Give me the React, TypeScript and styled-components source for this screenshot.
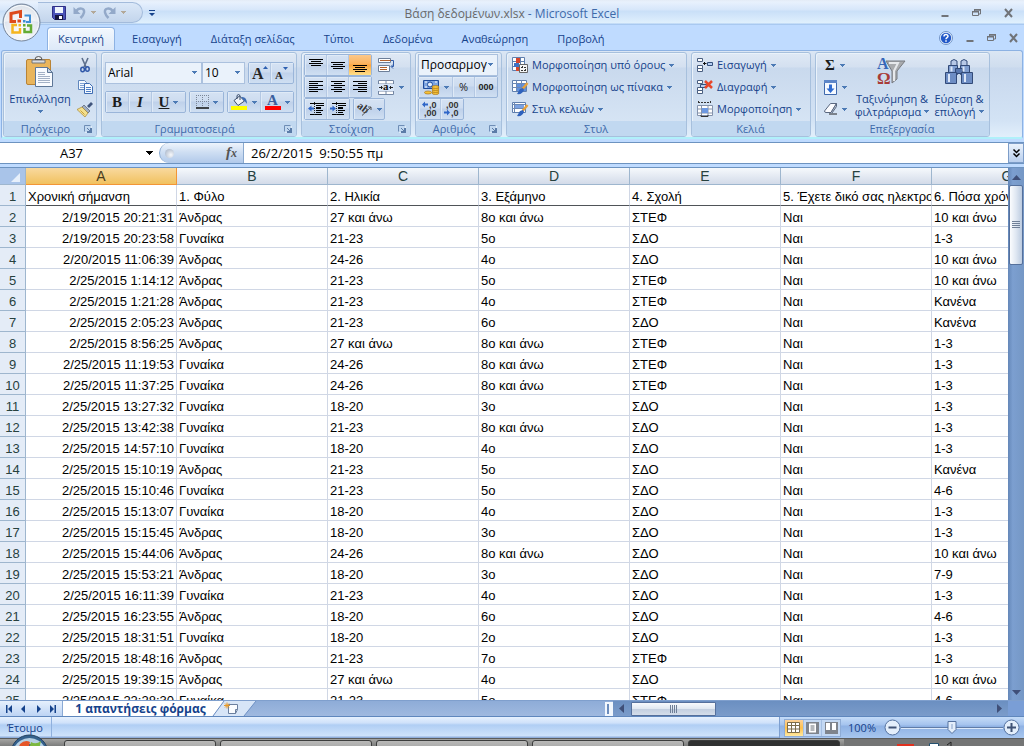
import React, { useState } from "react";
import styled, { createGlobalStyle, css } from "styled-components";

const UI_FONT = '"Open Sans", "Noto Sans", sans-serif';
const CELL_FONT = '"Liberation Sans", Arial, sans-serif';

const GlobalStyle = createGlobalStyle`
  *, *::before, *::after { box-sizing: border-box; }
  body { margin: 0; background: #b3cbec; overflow: hidden; }
  button, input, select { font: inherit; color: inherit; margin: 0; padding: 0; border: 0; background: none; outline: none; }
  svg { display: block; flex: none; overflow: visible; }
`;

const Window = styled.div`
  display: flex;
  flex-direction: column;
  height: 100vh;
  position: relative;
  overflow: hidden;
  font: 11px/16px ${UI_FONT};
  color: #15428b;
  background: #bfdbff;
`;

/* ---------- title bar ---------- */

const TitleBar = styled.header`
  display: grid;
  grid-template-columns: 1fr auto 1fr;
  align-items: center;
  height: 25px;
  flex: none;
  padding-left: 38px;
  background: linear-gradient(#e3ebf6 0, #e8f1fd 2px, #d6e6fa 10px, #c9dff8 11px, #e0f0fd 23px, #a9c9f0 24px);
`;

const QuickAccess = styled.div`
  display: flex;
  align-items: center;
  gap: 6px;
`;

const QuickPill = styled.div`
  display: flex;
  align-items: center;
  gap: 7px;
  height: 21px;
  width: 105px;
  padding-left: 14px;
  border: 1px solid #a3bbdb;
  border-left: 0;
  border-radius: 0 11px 11px 0;
  background: linear-gradient(#dbe8f8, #c3d5ec);
`;

const PlainButton = styled.button`
  display: flex;
  align-items: center;
  justify-content: center;
  gap: 5px;
`;

const Caption = styled.h1`
  margin: 0;
  padding: 2px 38px 0 0;
  font-size: 12px;
  font-weight: 400;
  line-height: 20px;
  color: #3e6aaa;
`;

const FileName = styled.span`
  color: #696969;
`;

const WindowButtons = styled.div<{ $gap: number; $right: number }>`
  display: flex;
  align-items: center;
  justify-self: end;
  gap: ${(p) => p.$gap}px;
  padding-right: ${(p) => p.$right}px;
`;

const OfficeButton = styled.button`
  position: absolute;
  left: 2px;
  top: 3px;
  z-index: 2;
  line-height: 0;
`;

/* ---------- ribbon ---------- */

const TabRow = styled.div`
  display: flex;
  justify-content: space-between;
  height: 25px;
  flex: none;
  padding-left: 47px;
  background: #bfdbff;
`;

const TabList = styled.div`
  display: flex;
  align-items: flex-end;
`;

const Tab = styled.button<{ $active?: boolean }>`
  height: 23px;
  padding: 0 14px;
  border: 1px solid transparent;
  border-width: 1px 1px 0 0;
  ${(p) =>
    p.$active &&
    css`
      padding: 0 10px;
      margin-right: 3px;
      border-width: 1px 1px 0;
      border-color: #8db2e3;
      border-radius: 4px 4px 0 0;
      background: linear-gradient(#f3f8fe, #dde9f8);
      box-shadow: inset 1px 1px 0 #fff;
    `}
`;

const Ribbon = styled.div`
  display: flex;
  gap: 4px;
  height: 89px;
  flex: none;
  margin: 0 1px;
  padding: 1px 1px 0;
  border: 1px solid #8db2e3;
  border-bottom: 2px solid #b0f0fa;
  border-radius: 3px;
  background: linear-gradient(#dbe6f4 0, #cfddee 16px, #c8d8ed 17px, #d3e3f5 70px, #e2effb 100%);
`;

const Group = styled.section<{ $width: number }>`
  display: flex;
  flex-direction: column;
  width: ${(p) => p.$width}px;
  flex: none;
  border: 1px solid #a7c0dd;
  border-radius: 3px;
  background: linear-gradient(#dfe9f5 0, #d4e0f0 14px, #c9d9ed 15px, #d9e7f6 100%);
  box-shadow: inset 1px 1px 0 #eaf2fa;
  overflow: hidden;
`;

const GroupBody = styled.div<{ $pad?: string; $gap?: number; $column?: boolean }>`
  display: flex;
  flex: 1;
  min-height: 0;
  flex-direction: ${(p) => (p.$column ? "column" : "row")};
  gap: ${(p) => p.$gap || 0}px;
  padding: ${(p) => p.$pad || "1px 2px 0"};
`;

const GroupFooter = styled.div`
  display: flex;
  align-items: center;
  height: 15px;
  flex: none;
  padding: 0 4px 0 3px;
  background: #c1d8f0;
  color: #3e6aaa;
  white-space: nowrap;
`;

const GroupName = styled.h2`
  flex: 1;
  margin: 0;
  font-size: 11px;
  font-weight: 400;
  line-height: 15px;
  text-align: center;
`;

const LargeButton = styled.button<{ $width: number }>`
  display: flex;
  flex-direction: column;
  align-items: center;
  width: ${(p) => p.$width}px;
  flex: none;
  padding-top: 2px;
  line-height: 13px;
  white-space: nowrap;
`;

const LargeIcon = styled.span`
  height: 36px;
`;

const LabelLine = styled.span`
  display: flex;
  align-items: center;
  gap: 3px;
  min-height: 13px;
`;

const Stack = styled.div`
  display: flex;
  flex-direction: column;
`;

const Row = styled.div<{ $gap?: number }>`
  display: flex;
  align-items: center;
  gap: ${(p) => p.$gap || 0}px;
`;

const IconButton = styled.button<{ $width: number }>`
  display: flex;
  align-items: center;
  justify-content: center;
  gap: 5px;
  width: ${(p) => p.$width}px;
  height: 22px;
`;

const TextButton = styled.button`
  display: flex;
  align-items: center;
  gap: 4px;
  height: 22px;
  padding-left: 3px;
  white-space: nowrap;
`;

const ButtonSet = styled.div`
  display: flex;
  height: 22px;
  border: 1px solid #9ab5d9;
  border-radius: 2px;
  background: linear-gradient(#d5e2f3 0, #cddcf0 9px, #bfd1ea 10px, #cfdff2 100%);
`;

const SetButton = styled.button<{ $width: number; $on?: boolean }>`
  display: flex;
  align-items: center;
  justify-content: center;
  gap: 4px;
  width: ${(p) => p.$width}px;
  color: #222;
  border-right: 1px solid #b4c8e3;
  box-shadow: inset 1px 1px 0 #dfeaf7;
  &:last-child { border-right: 0; }
  ${(p) =>
    p.$on &&
    css`
      background: linear-gradient(#fbc88b 0, #fdb35c 9px, #fca63f 10px, #ffe08a 100%);
      box-shadow: none;
    `}
`;

const ThousandsMark = styled.span`
  font: 700 9px/16px ${CELL_FONT};
`;

const Combo = styled.label<{ $width: number }>`
  position: relative;
  display: block;
  width: ${(p) => p.$width}px;
  height: 22px;
  border: 1px solid #abc1de;
  background: #eaf2fb;
  color: #000;
`;

const ComboSelect = styled.select`
  appearance: none;
  width: 100%;
  height: 20px;
  padding: 0 10px 0 2px;
  font-size: 12px;
  line-height: 20px;
`;

const ComboArrow = styled.span`
  position: absolute;
  right: 4px;
  top: 8px;
  pointer-events: none;
`;

/* ---------- formula bar ---------- */

const FormulaBar = styled.div`
  display: flex;
  flex: none;
  height: 22px;
  margin-top: 3px;
  border: 1px solid #6d93c0;
  border-width: 1px 0;
  background: #fff;
  color: #000;
  font-size: 13px;
`;

const NameBox = styled.label`
  display: flex;
  align-items: center;
  width: 159px;
  padding-right: 6px;
`;

const NameInput = styled.input`
  flex: 1;
  min-width: 0;
  text-align: center;
  padding-right: 3px;
`;

const FxPanel = styled.div`
  display: flex;
  align-items: center;
  justify-content: space-between;
  width: 85px;
  padding: 0 6px 0 5px;
  border: 1px solid #8aa9cf;
  border-width: 0 1px 0 1px;
  border-radius: 10px 0 0 10px;
  background: linear-gradient(#eef4fc, #cfdff3 45%, #b1c9ea);
`;

const Knob = styled.span`
  width: 9px;
  height: 9px;
  border-radius: 50%;
  background: radial-gradient(circle at 65% 65%, #f6f8fb, #9fadc2);
`;

const FxButton = styled.button`
  font: italic 700 15px/18px "Liberation Serif", serif;
  color: #555;
  padding-bottom: 2px;
`;

const FxSub = styled.span`
  font-size: 12px;
`;

const FormulaInput = styled.input`
  flex: 1;
  min-width: 0;
  padding-left: 7px;
`;

const ExpandButton = styled.button`
  display: flex;
  align-items: center;
  justify-content: center;
  width: 16px;
  border: 1px solid #7d9dc9;
  background: linear-gradient(#eaf2fc, #b9cfee);
`;

/* ---------- sheet ---------- */

const SheetArea = styled.div`
  display: flex;
  flex: 1;
  min-height: 0;
  margin-top: 3px;
  border-top: 1px solid #6d93c0;
  background: #fff;
`;

const SheetView = styled.div`
  flex: 1;
  min-width: 0;
  overflow: hidden;
`;

const Sheet = styled.table`
  table-layout: fixed;
  border-collapse: separate;
  border-spacing: 0;
  width: 1083px;
  font: 13px/20px ${CELL_FONT};
  color: #000;
`;

const Corner = styled.td`
  height: 17px;
  padding: 4px 5px 1px;
  border-right: 1px solid #9eb6ce;
  border-bottom: 1px solid #9eb6ce;
  background: #a9c4e9;
`;

const ColumnHead = styled.th<{ $active?: boolean }>`
  height: 17px;
  padding: 0;
  font-size: 14px;
  font-weight: 400;
  line-height: 16px;
  color: ${(p) => (p.$active ? "#4a3c20" : "#27413e")};
  border-right: 1px solid ${(p) => (p.$active ? "#f29536" : "#9eb6ce")};
  border-bottom: 1px solid ${(p) => (p.$active ? "#f29536" : "#9eb6ce")};
  background: ${(p) => (p.$active ? "linear-gradient(#f9d99f, #f1c15f)" : "linear-gradient(#f6f9fc, #d3dbe9)")};
`;

const RowHead = styled.th`
  height: 21px;
  padding: 4px 0 0;
  font-weight: 400;
  line-height: 16px;
  color: #27413e;
  border-right: 1px solid #9eb6ce;
  border-bottom: 1px solid #9eb6ce;
  background: #e4ecf7;
`;

const Cell = styled.td<{ $right?: boolean; $frozen?: boolean }>`
  height: 21px;
  padding: 4px 2px 0;
  line-height: 16px;
  overflow: hidden;
  white-space: nowrap;
  text-align: ${(p) => (p.$right ? "right" : "left")};
  border-right: 1px solid #d0d7e5;
  border-bottom: 1px solid ${(p) => (p.$frozen ? "#4f5358" : "#d0d7e5")};
`;

const VerticalBar = styled.div`
  display: flex;
  flex-direction: column;
  align-items: center;
  width: 16px;
  flex: none;
  padding: 7px 0 5px;
  background: linear-gradient(90deg, #6487b8, #7c9fd0 30%, #7597c5);
`;

const VerticalThumb = styled.div`
  display: flex;
  align-items: center;
  justify-content: center;
  width: 14px;
  height: 80px;
  margin: 5px 0 auto;
  border: 1px solid #55709c;
  border-radius: 2px;
  background: linear-gradient(90deg, #fbfcfe, #dfe7f2 50%, #bccbe0);
`;

const SheetBar = styled.div`
  display: flex;
  flex: none;
  height: 17px;
  border-top: 1px solid #7f9fcd;
  border-bottom: 1px solid #5f87bd;
  background: linear-gradient(#8eacd8, #9fb9df);
`;

const SheetNav = styled.div`
  display: flex;
  align-items: center;
  justify-content: space-between;
  width: 63px;
  padding: 0 6px;
  border-right: 1px solid #8aa9d4;
  background: linear-gradient(#e6f0fd, #bdd4f4);
`;

const SheetTab = styled.button`
  padding: 0 2px 0 10px;
  background: #fff;
  font-size: 12px;
  font-weight: 700;
  line-height: 15px;
  color: #15428b;
  white-space: nowrap;
  min-width: 147px;
`;

const BarFill = styled.div`
  flex: 1;
`;

const Splitter = styled.div`
  width: 8px;
  margin-top: 1px;
  border: 2px solid #f2f7fd;
  border-right-width: 4px;
  background: #6b8cbd;
`;

const HorizontalBar = styled.div`
  display: flex;
  align-items: center;
  width: 395px;
  padding: 0 6px;
  background: linear-gradient(#6b8fc1, #7b9cca);
`;

const HorizontalThumb = styled.div`
  display: flex;
  align-items: center;
  justify-content: center;
  width: 85px;
  height: 14px;
  margin: 0 auto 0 7px;
  border: 1px solid #55709c;
  border-radius: 1px;
  background: linear-gradient(#f8fafd, #dfe7f1 50%, #c3cfe0 51%, #d5deea);
`;

const BarCorner = styled.div`
  width: 16px;
  background: #7a9ed6;
`;

/* ---------- status bar ---------- */

const StatusBar = styled.footer`
  display: flex;
  flex: none;
  height: 21px;
  background: linear-gradient(#e6f1fe 0, #cfe1fa 6px, #b0cef4 8px, #cfe3fb 19px, #90aedb 20px);
`;

const StatusText = styled.span`
  padding: 1px 8px 0 7px;
  line-height: 19px;
  border-right: 1px solid #8fb0dd;
`;

const StatusTools = styled.div`
  display: flex;
  align-items: center;
  padding: 0 4px;
  border-left: 1px solid #7d9fd0;
  background: linear-gradient(#c5dcf8 0, #a4c3ee 8px, #8fb2e4 9px, #a7c6ef 100%);
`;

const ViewSet = styled.div`
  display: flex;
  height: 18px;
  width: 57px;
  margin-right: 7px;
  border: 1px solid #8eacd6;
  background: #c3d8f3;
`;

const ViewButton = styled.button<{ $on?: boolean }>`
  display: flex;
  flex: 1;
  align-items: center;
  justify-content: center;
  border-right: 1px solid #a5bfe2;
  background: ${(p) => (p.$on ? "linear-gradient(#fbd19a, #fdc04c 50%, #ffe9a0)" : "none")};
  &:last-child { border-right: 0; }
`;

const ZoomLabel = styled.output`
  width: 36px;
`;

const ZoomTrack = styled.label`
  position: relative;
  display: flex;
  align-items: center;
  width: 102px;
  height: 18px;
`;

const ZoomLine = styled.span`
  flex: 1;
  height: 2px;
  background: #5f7ca8;
  border-bottom: 1px solid #dce9fa;
`;

const ZoomRange = styled.input`
  position: absolute;
  inset: 0;
  width: 100%;
  height: 100%;
  opacity: 0;
`;

const ZoomThumb = styled.span`
  position: absolute;
  top: 2px;
  transform: translateX(-50%);
  pointer-events: none;
`;

/* ---------- desktop task bar ---------- */

const TaskBar = styled.div`
  display: flex;
  gap: 4px;
  flex: none;
  height: 8px;
  padding-left: 64px;
  overflow: hidden;
  border-top: 1px solid #5b5c5c;
  background: linear-gradient(#a5a5a3, #7c7d7c);
`;

const TaskButton = styled.button<{ $active?: boolean }>`
  width: 152px;
  height: 24px;
  flex: none;
  margin-top: 1px;
  padding: 4px 9px;
  border: 1px solid #3c3d3d;
  border-radius: 3px;
  background: ${(p) => (p.$active ? "#303131" : "linear-gradient(#b9b9b8, #858686)")};
`;

const Tray = styled.div`
  flex: 1;
  padding-left: 53px;
  background: #747575;
`;

const StartOrb = styled.button`
  position: absolute;
  left: 10px;
  bottom: -26px;
  z-index: 2;
`;

/* ---------- icons ---------- */

const Arrow = ({ color = "#4c7ab5" }: { color?: string }) => (
  <svg width="5" height="3" viewBox="0 0 5 3" shapeRendering="crispEdges">
    <path d="M0 0h5v1H0zM1 1h3v1H1zM2 2h1v1H2z" fill={color} />
  </svg>
);

const NameArrow = () => (
  <svg width="7" height="4" viewBox="0 0 7 4" shapeRendering="crispEdges">
    <path d="M0 0h7v1H0zM1 1h5v1H1zM2 2h3v1H2zM3 3h1v1H3z" fill="#000" />
  </svg>
);

const OfficeLogo = () => (
  <svg width="39" height="39" viewBox="0 0 39 39">
    <defs>
      <radialGradient id="orb" cx="50%" cy="75%" r="75%">
        <stop offset="0" stopColor="#ffffff" />
        <stop offset="0.6" stopColor="#e3e8f0" />
        <stop offset="1" stopColor="#b3bfd0" />
      </radialGradient>
    </defs>
    <circle cx="19.500" cy="19.500" r="18.500" fill="url(#orb)" stroke="#76869c" />
    <circle cx="19.500" cy="19.500" r="17" fill="none" stroke="#f4f8fc" />
    <path d="M2.500 19a17 17 0 0 1 34 0q-17-5-34 0z" fill="#fff" opacity="0.5" />
    <g fill="none">
      <path d="M14 18.500H9V10.500l9.500-2v6.500" stroke="#dd4a1c" strokeWidth="3" />
      <path d="M22.500 12.500H28V19h-4" stroke="#3f8fd6" strokeWidth="2" />
      <path d="M15 22h-4.500v7.500H18V25" stroke="#f5b51e" strokeWidth="2.500" />
      <path d="M25 22.500h4v6.500h-6.500v-4" stroke="#64ac34" strokeWidth="2.500" />
    </g>
    <path d="M15.500 16.500h3.500v3h-3.500z" fill="#dd4a1c" />
    <path d="M21 17h2.500v2.500H21z" fill="#3f8fd6" />
    <path d="M16.500 21h2.500v2.500h-2.500z" fill="#f5b51e" />
    <path d="M21 21h2.500v2.500H21z" fill="#64ac34" />
  </svg>
);

const SaveIcon = () => (
  <svg width="14" height="14" viewBox="0 0 14 14">
    <path d="M0.500 0.500h13v13h-11l-2-2z" fill="#4a53b8" stroke="#2f2f86" />
    <path d="M3 1h8v6H3z" fill="#eef4fd" />
    <path d="M3 9h8v5H3z" fill="#15153f" />
    <path d="M7 10h3v3H7z" fill="#fff" />
  </svg>
);

const UndoIcon = ({ flip }: { flip?: boolean }) => (
  <svg width="13" height="13" viewBox="0 0 13 13">
    <g transform={flip ? "matrix(-1 0 0 1 13 0)" : undefined}>
      <path d="M3 5.500C6 1 12 2 11 6.500 10.500 9 9 10.500 7.500 12" fill="none" stroke="#93a9c9" strokeWidth="2.500" />
      <path d="M0.500 1v7h7z" fill="#93a9c9" />
    </g>
  </svg>
);

const CustomizeIcon = () => (
  <svg width="6" height="6" viewBox="0 0 6 6">
    <path d="M0 0h6v1H0zM0 3h6L3 6z" fill="#15428b" />
  </svg>
);

const MinIcon = () => (
  <svg width="8" height="10" viewBox="0 0 8 10">
    <path d="M0.500 8h7" stroke="#707378" strokeWidth="2" />
  </svg>
);

const RestoreIcon = () => (
  <svg width="9" height="8" viewBox="0 0 9 8">
    <path d="M2.500 2V1h6v4h-1.500M0.500 2.500h6v4h-6z" fill="none" stroke="#707378" />
    <path d="M0 2h7v1.500H0zM2 0h7v1.500H2z" fill="#707378" />
  </svg>
);

const CloseIcon = () => (
  <svg width="9" height="8" viewBox="0 0 9 8">
    <path d="M1 0l7 8M8 0L1 8" stroke="#707378" strokeWidth="2" />
  </svg>
);

const HelpIcon = () => (
  <svg width="14" height="14" viewBox="0 0 14 14">
    <circle cx="7" cy="7" r="6.500" fill="#e9f2fd" stroke="#6f93c8" />
    <circle cx="7" cy="7" r="5.200" fill="#2258c8" />
    <path d="M5 5.600C5 3 9 3 9 5.300 9 6.800 7 6.500 7 8.300M7 9.300v1.500" fill="none" stroke="#fff" strokeWidth="1.500" />
  </svg>
);

const PasteIcon = () => (
  <svg width="28" height="32" viewBox="0 0 28 32">
    <rect x="0.500" y="3.500" width="24" height="25" rx="1.500" fill="#e9b55c" stroke="#b98335" />
    <path d="M6 4h13v3H6z" fill="#d8dde4" stroke="#777" />
    <path d="M9 3.500q0-3 3.500-3t3.500 3z" fill="#eee" stroke="#555" />
    <path d="M9.500 11.500h12l5 5v14h-17z" fill="#f8fbff" stroke="#5e7797" />
    <path d="M21.500 11.500v5h5z" fill="#c9d6e6" stroke="#5e7797" />
    <path d="M12 16.500h7M12 18.500h7M12 20.500h12M12 22.500h12M12 24.500h12M12 26.500h12" stroke="#a3b1c6" />
  </svg>
);

const CutIcon = () => (
  <svg width="10" height="15" viewBox="0 0 10 15">
    <path d="M2 0l4 9M8 0L4 9" stroke="#5d6f8c" strokeWidth="1.600" />
    <ellipse cx="2.600" cy="11.500" rx="1.800" ry="2.300" fill="none" stroke="#2f57a8" strokeWidth="1.500" />
    <ellipse cx="7.400" cy="11" rx="1.800" ry="2.300" fill="none" stroke="#2f57a8" strokeWidth="1.500" />
  </svg>
);

const CopyIcon = () => (
  <svg width="15" height="14" viewBox="0 0 15 14">
    <path d="M0.500 0.500h6l2 2v7h-8z" fill="#f4f9ff" stroke="#5f86bd" />
    <path d="M2 3.500h4M2 5.500h4M2 7.500h4" stroke="#7fa3d5" />
    <path d="M6.500 3.500h5l3 3v7h-8z" fill="#f4f9ff" stroke="#3f6db3" />
    <path d="M8 7.500h5M8 9.500h5M8 11.500h5" stroke="#4d7fc6" />
  </svg>
);

const PainterIcon = () => (
  <svg width="16" height="15" viewBox="0 0 16 15">
    <path d="M10 4l4-4 2 2-4 4z" fill="#40557c" />
    <path d="M7 3l6 6-2 2-6-6z" fill="#a0aec2" stroke="#555f70" strokeWidth="0.700" />
    <path d="M5 5l6 6-3 4L0 7.500z" fill="#f3e08e" stroke="#a88632" strokeWidth="0.700" />
    <path d="M3.500 8.500l4 4" stroke="#c79e3c" />
  </svg>
);

const LauncherIcon = () => (
  <svg width="8" height="8" viewBox="0 0 8 8">
    <path d="M0.500 6.500v-6h6" fill="none" stroke="#6e8db5" />
    <path d="M6 3h2v5H3V6h3z" fill="#5b7ca8" />
    <path d="M3 3l3 3" stroke="#5b7ca8" />
    <path d="M0 0M1.500 7.500h1M7.500 1.500v1" stroke="#fff" />
  </svg>
);

const GrowIcon = ({ small }: { small?: boolean }) => (
  <svg width="16" height="18" viewBox="0 0 16 18">
    <text x={small ? 1 : 0} y="15" fontFamily="Liberation Serif, serif" fontWeight="700" fontSize={small ? 11 : 16} fill="#262626">
      A
    </text>
    <path d={small ? "M9 3h5l-2.500 3z" : "M11 5h5l-2.500-3z"} fill="#2c5fb0" />
  </svg>
);

const Glyph = styled.span<{ $italic?: boolean; $under?: boolean }>`
  font: 700 15px/18px "Liberation Serif", serif;
  font-style: ${(p) => (p.$italic ? "italic" : "normal")};
  text-decoration: ${(p) => (p.$under ? "underline" : "none")};
  color: #1c1c1c;
`;

const BorderIcon = () => (
  <svg width="13" height="14" viewBox="0 0 13 14">
    <path d="M0.500 0v12M6.500 0v12M12.500 0v12M0 0.500h13M0 6.500h13" stroke="#7c8798" strokeDasharray="1 1" />
    <path d="M0 13h13" stroke="#111" strokeWidth="1.500" />
  </svg>
);

const FillIcon = () => (
  <svg width="17" height="16" viewBox="0 0 17 16">
    <path d="M3 6.500L8.500 2l5 5L7 11.500z" fill="#eef3fa" stroke="#3b4d6b" />
    <path d="M6 5V1.500q1.500-2 3 0V6" fill="none" stroke="#3b4d6b" />
    <path d="M10 3q6-1 6 7-2-3-3-3z" fill="#3f6db3" />
    <path d="M0 12h16v4H0z" fill="#ffff00" />
  </svg>
);

const FontColorIcon = () => (
  <svg width="16" height="16" viewBox="0 0 16 16">
    <text x="2" y="11" fontFamily="Liberation Serif, serif" fontWeight="700" fontSize="15" fill="#3a5f9e">
      A
    </text>
    <path d="M0 12h16v4H0z" fill="#ff0000" />
  </svg>
);

const LinesIcon = ({ d, width = 14 }: { d: string; width?: number }) => (
  <svg width={width} height="16" viewBox={`0 0 ${width} 16`} shapeRendering="crispEdges">
    <path d={d} stroke="#000" fill="none" />
  </svg>
);

const TOP = "M0 2.500h14M2 4.500h10M0 6.500h14M2 8.500h10";
const MIDDLE = "M0 5.500h14M2 7.500h10M0 9.500h14M2 11.500h10";
const BOTTOM = "M0 8.500h14M2 10.500h10M0 12.500h14M2 14.500h10";
const LEFT = "M0 2.500h14M0 4.500h9M0 6.500h14M0 8.500h9M0 10.500h14M0 12.500h9";
const CENTER = "M0 2.500h14M3 4.500h8M0 6.500h14M3 8.500h8M0 10.500h14M3 12.500h8";
const RIGHT = "M0 2.500h14M5 4.500h9M0 6.500h14M5 8.500h9M0 10.500h14M5 12.500h9";

const IndentIcon = ({ out }: { out?: boolean }) => (
  <svg width="16" height="14" viewBox="0 0 16 14">
    <path d="M2 1.500h14M8 3.500h8M8 8.500h7M8 10.500h5M2 12.500h12" stroke="#000" />
    <path d="M8 6h5" stroke="#000" strokeWidth="2" />
    <path d="M6.500 0v14" stroke="#222" strokeDasharray="1 1" />
    <path d={out ? "M0 6.500l3.500-3v2H6v2H3.500v2z" : "M6 6.500l-3.500-3v2H0v2h2.500v2z"} fill="#2f66c8" />
  </svg>
);

const OrientationIcon = () => (
  <svg width="16" height="14" viewBox="0 0 16 14">
    <text x="0" y="8" transform="rotate(38 4 6)" fontFamily="Liberation Serif, serif" fontWeight="700" fontSize="11" fill="#333">
      ab
    </text>
    <path d="M5 13.500L14 5M14 5h-3M14 5v3" fill="none" stroke="#555" />
  </svg>
);

const WrapIcon = () => (
  <svg width="17" height="16" viewBox="0 0 17 16">
    <path d="M0.500 1.500h12v4h-12zM0.500 8.500h11v6h-11z" fill="#fff" stroke="#6d7f99" />
    <path d="M2 3.500h12M2 10.500h7M2 12.500h7" stroke="#b0602c" />
    <path d="M13 3.500h2.500v6h-2M15 7.500l-2 2 2 2" fill="none" stroke="#2f5ba8" />
  </svg>
);

const MergeIcon = () => (
  <svg width="16" height="15" viewBox="0 0 16 15">
    <path d="M0.500 0.500h15v14H0.500zM0.500 4h15M0.500 11h15M8 0.500V4M8 11v3.500" fill="#fff" stroke="#7386a3" />
    <path d="M0 4h16v7H0z" fill="#d7e5f8" />
    <text x="5" y="10" fontFamily="Liberation Serif, serif" fontWeight="700" fontSize="11" fill="#111">
      a
    </text>
    <path d="M1 7.500h3M12 7.500h3M3 6l1.500 1.500L3 9M13 6l-1.500 1.500L13 9" fill="none" stroke="#222" />
  </svg>
);

const CurrencyIcon = () => (
  <svg width="17" height="16" viewBox="0 0 17 16">
    <path d="M0.500 1.500h15v8h-15z" fill="#7ba3e0" stroke="#1f4c9c" />
    <circle cx="7" cy="5.500" r="2.500" fill="#e4eefb" stroke="#1f4c9c" />
    <path d="M2 3h2M12 3h2M2 8h2" stroke="#fff" />
    <g fill="#f6c238" stroke="#a8741a" strokeWidth="0.700">
      <ellipse cx="12.500" cy="14" rx="3.500" ry="1.500" />
      <ellipse cx="12.500" cy="12" rx="3.500" ry="1.500" />
      <ellipse cx="12.500" cy="10" rx="3.500" ry="1.500" />
      <ellipse cx="12.500" cy="8" rx="3.500" ry="1.500" />
      <ellipse cx="5" cy="13.500" rx="3.500" ry="1.500" />
    </g>
  </svg>
);

const DecimalIcon = ({ more }: { more?: boolean }) => (
  <svg width="16" height="18" viewBox="0 0 16 18">
    <g fontFamily="Liberation Sans, sans-serif" fontWeight="700" fontSize="9" fill="#333">
      <text x={more ? 7 : 2} y="8">{more ? ",0" : ",00"}</text>
      <text x={more ? 2 : 7} y="16">{more ? ",00" : ",0"}</text>
    </g>
    <path d={more ? "M0 4.500l3-3v2h3v2H3v2z" : "M6 12.500l-3-3v2H0v2h3v2z"} fill="#2f66c8" />
  </svg>
);

const ConditionalIcon = () => (
  <svg width="16" height="16" viewBox="0 0 16 16">
    <path d="M0.500 0.500h12v13h-12zM4.500 0v14M8.500 0v14M0 4.500h12M0 9.500h12" fill="#fff" stroke="#5f7fae" />
    <path d="M4 1h4v5H4z" fill="#d6452d" />
    <path d="M2 6h5v4H2z" fill="#3f72c4" />
    <path d="M4 10h4v4H4z" fill="#d6452d" />
    <path d="M7.500 7.500h8v8h-8z" fill="#f6f6f6" stroke="#666" />
    <path d="M9 10.500h2M12 10.500h2M9 13.500h2M12 13.500h2M10.500 9v2M13.500 12v2" stroke="#333" />
  </svg>
);

const FormatTableIcon = () => (
  <svg width="16" height="16" viewBox="0 0 16 16">
    <path d="M0.500 1.500h14v11h-14z" fill="#fff" stroke="#5f7fae" />
    <path d="M5 5h9v7H5z" fill="#5f8fdc" />
    <path d="M0 4.500h14M0 8.500h14M4.500 1v11M9.500 1v11" stroke="#6b88b5" />
    <path d="M15.500 4l-5 6" stroke="#e7a13a" strokeWidth="2.500" />
    <path d="M11 9l-3 1-3 5q5 1 7-4z" fill="#2f62bd" />
  </svg>
);

const CellStylesIcon = () => (
  <svg width="16" height="16" viewBox="0 0 16 16">
    <path d="M0.500 1.500h13v10h-13z" fill="#fff" stroke="#5f7fae" />
    <path d="M3 4h9v3H3z" fill="#7ba2e2" />
    <path d="M0 3.500h13M0 7.500h13M2.500 1v10" stroke="#6b88b5" />
    <path d="M15.500 4l-5 6" stroke="#e7a13a" strokeWidth="2.500" />
    <path d="M11 9l-3 1-3 5q5 1 7-4z" fill="#2f62bd" />
  </svg>
);

const InsertCellsIcon = () => (
  <svg width="16" height="14" viewBox="0 0 16 14">
    <path d="M0.500 0.500h5v3h-5zM0.500 7.500h5v3h-5zM0.500 10.500h5v3h-5z" fill="#fff" stroke="#4a5f80" />
    <path d="M10.500 4.500h5v3h-5z" fill="#b5cdf2" stroke="#34507c" />
    <path d="M6 5.500h3.500M7.500 4v3" stroke="#111" />
  </svg>
);

const DeleteCellsIcon = () => (
  <svg width="16" height="14" viewBox="0 0 16 14">
    <path d="M0.500 0.500h5v3h-5zM0.500 7.500h5v3h-5zM0.500 10.500h5v3h-5z" fill="#fff" stroke="#4a5f80" />
    <path d="M3.500 4.500h6v3h-6z" fill="#b5cdf2" stroke="#34507c" />
    <path d="M8 1l7 7M15 1L8 8" stroke="#e8462a" strokeWidth="2.500" />
  </svg>
);

const FormatCellsIcon = () => (
  <svg width="16" height="16" viewBox="0 0 16 16">
    <path d="M1 1.500h13M1.500 0v3M13.500 0v3" stroke="#333" strokeDasharray="2 1" />
    <path d="M0.500 4.500h15v10h-15zM0 8h16M0 12h16M4.500 4v11M11 4v11" fill="#fff" stroke="#8493ad" />
    <path d="M5 7h6v5H5z" fill="#6d98e0" />
    <path d="M4 14v1.500h7V14" fill="none" stroke="#333" />
  </svg>
);

const FillDownIcon = () => (
  <svg width="13" height="15" viewBox="0 0 13 15">
    <path d="M0.500 0.500h12v14h-12z" fill="#f6faff" stroke="#3f69ad" />
    <path d="M0 0h13v3H0z" fill="#5d86c8" />
    <path d="M5 4.500h3v4h2.500l-4 4.500-4-4.500H5z" fill="#2f6bd0" />
  </svg>
);

const EraserIcon = () => (
  <svg width="13" height="12" viewBox="0 0 13 12">
    <path d="M0.500 8l6-7.500h6L7 9.500H2q-1.500 0-1.500-1.500z" fill="#fbfcff" stroke="#5a6880" />
    <path d="M7 9.500l5.500-9v3L8 10" fill="#c6d0de" stroke="#5a6880" />
    <path d="M5 11h8" stroke="#222" />
  </svg>
);

const SortFilterIcon = () => (
  <svg width="30" height="32" viewBox="0 0 30 32">
    <text x="0" y="13" fontFamily="Liberation Serif, serif" fontWeight="700" fontSize="16" fill="#3567b8">
      A
    </text>
    <text x="0" y="28" fontFamily="Liberation Serif, serif" fontWeight="700" fontSize="17" fill="#a83c37">
      Ω
    </text>
    <path d="M9 5h19l-8 10v8l-5 4V15z" fill="#a9abae" stroke="#777a80" />
    <path d="M12 7h9l-4 8v10" fill="none" stroke="#e7e9ec" strokeWidth="2" />
  </svg>
);

const BinocularsIcon = () => (
  <svg width="28" height="32" viewBox="0 0 28 32">
    <g transform="translate(0 3)">
      <g stroke="#324a78">
        <path d="M6 2q3-3 6 0v6H6zM16 2q3-3 6 0v6h-6z" fill="#b7c8e6" />
        <path d="M3.500 6.500h9v9h-9zM15.500 6.500h9v9h-9z" fill="#7f9dcf" />
        <path d="M10.500 9.500h7v5h-7z" fill="#5877ae" />
        <path d="M0.500 13.500h11v11h-11zM16.500 13.500h11v11h-11z" fill="#6d8dc4" />
      </g>
      <path d="M4 15v8M6.500 7.500v5M20 15v8M18.500 7.500v5" stroke="#dce7f8" strokeWidth="2" />
    </g>
  </svg>
);

const Grip = ({ vertical }: { vertical?: boolean }) => (
  <svg width="8" height="8" viewBox="0 0 8 8">
    <path d={vertical ? "M0 .5h8M0 2.500h8M0 4.500h8M0 6.500h8" : "M.5 0v8M2.500 0v8M4.500 0v8M6.500 0v8"} stroke="#6f7f97" />
  </svg>
);

const BarArrow = ({ d, w, h }: { d: string; w: number; h: number }) => (
  <svg width={w} height={h} viewBox={`0 0 ${w} ${h}`}>
    <path d={d} fill="#3f4f78" />
  </svg>
);

const NavIcon = ({ d }: { d: string }) => (
  <svg width="7" height="8" viewBox="0 0 7 8">
    <path d={d} fill="#15428b" />
  </svg>
);

const SlantIcon = () => (
  <svg width="47" height="15" viewBox="0 0 47 15">
    <path d="M0 0h14L3 15H0z" fill="#fff" />
    <path d="M14 0h32L34 15H3z" fill="#d7e5f7" />
    <path d="M14 0L3 15M46 0L34 15" stroke="#6d8fc4" fill="none" />
    <path d="M18.500 3.500h9v5l-2 4h-7z" fill="#fafcff" stroke="#6a7f9f" />
    <path d="M27.500 8.500h-2v4" fill="none" stroke="#6a7f9f" />
    <path d="M14 4.500h6M17 1.500v6M15 2.500l4 4M19 2.500l-4 4" stroke="#e99a28" />
  </svg>
);

const CircleIcon = ({ plus }: { plus?: boolean }) => (
  <svg width="17" height="17" viewBox="0 0 17 17">
    <circle cx="8.500" cy="8.500" r="7.500" fill="#e3eefb" stroke="#55729f" />
    <path d={plus ? "M4 8.500h9M8.500 4v9" : "M4.500 8.500h8"} stroke="#3f5275" strokeWidth="2" />
  </svg>
);

const NormalViewIcon = () => (
  <svg width="13" height="11" viewBox="0 0 13 11">
    <path d="M.5.5h12v10H.5zM0 3.500h13M0 7h13M4.500 0v11M8.500 0v11" fill="#fff" stroke="#7b6d4c" />
  </svg>
);

const PageViewIcon = () => (
  <svg width="13" height="12" viewBox="0 0 13 12">
    <path d="M0 0h13v12H0z" fill="#7f848c" />
    <path d="M3 1.500h7v9H3z" fill="#fff" />
    <path d="M4.500 4h4M4.500 6h4M4.500 8h4" stroke="#6b7078" />
  </svg>
);

const BreakViewIcon = () => (
  <svg width="13" height="12" viewBox="0 0 13 12">
    <path d="M0 0h13v12H0z" fill="#7f848c" />
    <path d="M1 1h4v7H1zM7 1h4v7H7z" fill="#fff" />
  </svg>
);

const StartIcon = () => (
  <svg width="39" height="38" viewBox="0 0 39 38">
    <circle cx="19.500" cy="19.500" r="18.500" fill="#35618d" stroke="#23415f" />
    <path d="M4 14a17 17 0 0 1 31 0q-15-8-31 0z" fill="#b5cfe2" />
    <path d="M10 10q5-5 10-2l-2 8H8z" fill="#e65528" />
    <path d="M21 8q5 3 10-1l-2 8H19z" fill="#7cb83e" />
  </svg>
);

/* ---------- data ---------- */

const COLUMNS = ["A", "B", "C", "D", "E", "F", "G"];

const HEADER = ["Χρονική σήμανση", "1. Φύλο", "2. Ηλικία", "3. Εξάμηνο", "4. Σχολή", "5. Έχετε δικό σας ηλεκτρονικό", "6. Πόσα χρόνια"];

const M = "Άνδρας";
const F = "Γυναίκα";

const ROWS: string[][] = [
  ["2/19/2015 20:21:31", M, "27 και άνω", "8ο και άνω", "ΣΤΕΦ", "Ναι", "10 και άνω"],
  ["2/19/2015 20:23:58", F, "21-23", "5ο", "ΣΔΟ", "Ναι", "1-3"],
  ["2/20/2015 11:06:39", M, "24-26", "4ο", "ΣΔΟ", "Ναι", "10 και άνω"],
  ["2/25/2015 1:14:12", M, "21-23", "5ο", "ΣΤΕΦ", "Ναι", "10 και άνω"],
  ["2/25/2015 1:21:28", M, "21-23", "4ο", "ΣΤΕΦ", "Ναι", "Κανένα"],
  ["2/25/2015 2:05:23", M, "21-23", "6ο", "ΣΔΟ", "Ναι", "Κανένα"],
  ["2/25/2015 8:56:25", M, "27 και άνω", "8ο και άνω", "ΣΤΕΦ", "Ναι", "1-3"],
  ["2/25/2015 11:19:53", F, "24-26", "8ο και άνω", "ΣΤΕΦ", "Ναι", "1-3"],
  ["2/25/2015 11:37:25", F, "24-26", "8ο και άνω", "ΣΤΕΦ", "Ναι", "1-3"],
  ["2/25/2015 13:27:32", F, "18-20", "3ο", "ΣΔΟ", "Ναι", "1-3"],
  ["2/25/2015 13:42:38", F, "21-23", "8ο και άνω", "ΣΔΟ", "Ναι", "1-3"],
  ["2/25/2015 14:57:10", F, "18-20", "4ο", "ΣΔΟ", "Ναι", "1-3"],
  ["2/25/2015 15:10:19", M, "21-23", "5ο", "ΣΔΟ", "Ναι", "Κανένα"],
  ["2/25/2015 15:10:46", F, "21-23", "5ο", "ΣΔΟ", "Ναι", "4-6"],
  ["2/25/2015 15:13:07", F, "18-20", "4ο", "ΣΔΟ", "Ναι", "1-3"],
  ["2/25/2015 15:15:45", M, "18-20", "3ο", "ΣΔΟ", "Ναι", "1-3"],
  ["2/25/2015 15:44:06", M, "24-26", "8ο και άνω", "ΣΔΟ", "Ναι", "10 και άνω"],
  ["2/25/2015 15:53:21", M, "18-20", "3ο", "ΣΔΟ", "Ναι", "7-9"],
  ["2/25/2015 16:11:39", F, "21-23", "4ο", "ΣΔΟ", "Ναι", "1-3"],
  ["2/25/2015 16:23:55", M, "18-20", "6ο", "ΣΔΟ", "Ναι", "4-6"],
  ["2/25/2015 18:31:51", F, "18-20", "2ο", "ΣΔΟ", "Ναι", "1-3"],
  ["2/25/2015 18:48:16", M, "21-23", "7ο", "ΣΤΕΦ", "Ναι", "1-3"],
  ["2/25/2015 19:39:15", M, "27 και άνω", "4ο", "ΣΔΟ", "Ναι", "10 και άνω"],
  ["2/25/2015 22:28:30", F, "21-23", "5ο", "ΣΤΕΦ", "Ναι", "4-6"],
];

const TABS = ["Κεντρική", "Εισαγωγή", "Διάταξη σελίδας", "Τύποι", "Δεδομένα", "Αναθεώρηση", "Προβολή"];

const RibbonGroup = ({ name, width, launcher, children }: { name: string; width: number; launcher?: boolean; children: React.ReactNode }) => (
  <Group $width={width}>
    {children}
    <GroupFooter>
      <GroupName>{name}</GroupName>
      {launcher && (
        <PlainButton aria-label={`Επιλογές: ${name}`}>
          <LauncherIcon />
        </PlainButton>
      )}
    </GroupFooter>
  </Group>
);

const ComboBox = ({ label, value, width }: { label: string; value: string; width: number }) => (
  <Combo $width={width}>
    <ComboSelect aria-label={label} defaultValue={value}>
      <option>{value}</option>
    </ComboSelect>
    <ComboArrow>
      <Arrow />
    </ComboArrow>
  </Combo>
);

export default function App() {
  const [zoom, setZoom] = useState(100);
  const [tab, setTab] = useState(0);

  return (
    <>
      <GlobalStyle />
      <Window>
        <OfficeButton aria-label="Κουμπί του Office">
          <OfficeLogo />
        </OfficeButton>

        <TitleBar>
          <QuickAccess>
            <QuickPill>
              <PlainButton aria-label="Αποθήκευση"><SaveIcon /></PlainButton>
              <PlainButton aria-label="Αναίρεση"><UndoIcon /><Arrow color="#b3a99a" /></PlainButton>
              <PlainButton aria-label="Ακύρωση αναίρεσης"><UndoIcon flip /><Arrow color="#b3a99a" /></PlainButton>
            </QuickPill>
            <PlainButton aria-label="Προσαρμογή"><CustomizeIcon /></PlainButton>
          </QuickAccess>
          <Caption>
            <FileName>Βάση δεδομένων.xlsx</FileName> - Microsoft Excel
          </Caption>
          <WindowButtons $gap={23} $right={11}>
            <PlainButton aria-label="Ελαχιστοποίηση"><MinIcon /></PlainButton>
            <PlainButton aria-label="Επαναφορά"><RestoreIcon /></PlainButton>
            <PlainButton aria-label="Κλείσιμο"><CloseIcon /></PlainButton>
          </WindowButtons>
        </TitleBar>

        <TabRow>
          <TabList role="tablist">
            {TABS.map((label, i) => (
              <Tab key={label} role="tab" aria-selected={tab === i} $active={tab === i} onClick={() => setTab(i)}>
                {label}
              </Tab>
            ))}
          </TabList>
          <WindowButtons $gap={13} $right={6}>
            <PlainButton aria-label="Βοήθεια"><HelpIcon /></PlainButton>
            <PlainButton aria-label="Ελαχιστοποίηση βιβλίου"><MinIcon /></PlainButton>
            <PlainButton aria-label="Επαναφορά βιβλίου"><RestoreIcon /></PlainButton>
            <PlainButton aria-label="Κλείσιμο βιβλίου"><CloseIcon /></PlainButton>
          </WindowButtons>
        </TabRow>

        <Ribbon>
          <RibbonGroup name="Πρόχειρο" width={94} launcher>
            <GroupBody>
              <LargeButton $width={68}>
                <LargeIcon><PasteIcon /></LargeIcon>
                <LabelLine>Επικόλληση</LabelLine>
                <LabelLine><Arrow /></LabelLine>
              </LargeButton>
              <Stack>
                <IconButton $width={22} aria-label="Αποκοπή"><CutIcon /></IconButton>
                <IconButton $width={22} aria-label="Αντιγραφή"><CopyIcon /></IconButton>
                <IconButton $width={22} aria-label="Πινέλο μορφοποίησης"><PainterIcon /></IconButton>
              </Stack>
            </GroupBody>
          </RibbonGroup>

          <RibbonGroup name="Γραμματοσειρά" width={196} launcher>
            <GroupBody $column $gap={7} $pad="9px 3px 0">
              <Row $gap={3}>
                <Row>
                  <ComboBox label="Γραμματοσειρά" value="Arial" width={97} />
                  <ComboBox label="Μέγεθος" value="10" width={43} />
                </Row>
                <ButtonSet>
                  <SetButton $width={22} aria-label="Αύξηση μεγέθους"><GrowIcon /></SetButton>
                  <SetButton $width={22} aria-label="Μείωση μεγέθους"><GrowIcon small /></SetButton>
                </ButtonSet>
              </Row>
              <Row $gap={3}>
                <ButtonSet>
                  <SetButton $width={23} aria-label="Έντονα"><Glyph>B</Glyph></SetButton>
                  <SetButton $width={23} aria-label="Πλάγια"><Glyph $italic>I</Glyph></SetButton>
                  <SetButton $width={33} aria-label="Υπογράμμιση"><Glyph $under>U</Glyph><Arrow /></SetButton>
                </ButtonSet>
                <ButtonSet>
                  <SetButton $width={33} aria-label="Περιγράμματα"><BorderIcon /><Arrow /></SetButton>
                </ButtonSet>
                <ButtonSet>
                  <SetButton $width={33} aria-label="Χρώμα γεμίσματος"><FillIcon /><Arrow /></SetButton>
                  <SetButton $width={32} aria-label="Χρώμα γραμματοσειράς"><FontColorIcon /><Arrow /></SetButton>
                </ButtonSet>
              </Row>
            </GroupBody>
          </RibbonGroup>

          <RibbonGroup name="Στοίχιση" width={110} launcher>
            <GroupBody $column>
              <Row $gap={6}>
                <ButtonSet>
                  <SetButton $width={22} aria-label="Στοίχιση επάνω"><LinesIcon d={TOP} /></SetButton>
                  <SetButton $width={22} aria-label="Στοίχιση στη μέση"><LinesIcon d={MIDDLE} /></SetButton>
                  <SetButton $width={22} $on aria-label="Στοίχιση κάτω"><LinesIcon d={BOTTOM} /></SetButton>
                </ButtonSet>
                <PlainButton aria-label="Αναδίπλωση κειμένου"><WrapIcon /></PlainButton>
              </Row>
              <Row $gap={6}>
                <ButtonSet>
                  <SetButton $width={22} aria-label="Αριστερά"><LinesIcon d={LEFT} /></SetButton>
                  <SetButton $width={22} aria-label="Κέντρο"><LinesIcon d={CENTER} /></SetButton>
                  <SetButton $width={22} aria-label="Δεξιά"><LinesIcon d={RIGHT} /></SetButton>
                </ButtonSet>
                <PlainButton aria-label="Συγχώνευση"><MergeIcon /><Arrow /></PlainButton>
              </Row>
              <Row $gap={3}>
                <ButtonSet>
                  <SetButton $width={22} aria-label="Μείωση εσοχής"><IndentIcon out /></SetButton>
                  <SetButton $width={22} aria-label="Αύξηση εσοχής"><IndentIcon /></SetButton>
                </ButtonSet>
                <ButtonSet>
                  <SetButton $width={30} aria-label="Προσανατολισμός"><OrientationIcon /><Arrow /></SetButton>
                </ButtonSet>
              </Row>
            </GroupBody>
          </RibbonGroup>

          <RibbonGroup name="Αριθμός" width={87} launcher>
            <GroupBody $column>
              <ComboBox label="Μορφή αριθμού" value="Προσαρμογ" width={80} />
              <Row>
                <ButtonSet>
                  <SetButton $width={34} aria-label="Νόμισμα"><CurrencyIcon /><Arrow /></SetButton>
                  <SetButton $width={22}>%</SetButton>
                  <SetButton $width={22}><ThousandsMark>000</ThousandsMark></SetButton>
                </ButtonSet>
              </Row>
              <Row>
                <ButtonSet>
                  <SetButton $width={22} aria-label="Αύξηση δεκαδικών"><DecimalIcon more /></SetButton>
                  <SetButton $width={22} aria-label="Μείωση δεκαδικών"><DecimalIcon /></SetButton>
                </ButtonSet>
              </Row>
            </GroupBody>
          </RibbonGroup>

          <RibbonGroup name="Στυλ" width={181}>
            <GroupBody $column>
              <TextButton><ConditionalIcon />Μορφοποίηση υπό όρους<Arrow /></TextButton>
              <TextButton><FormatTableIcon />Μορφοποίηση ως πίνακα<Arrow /></TextButton>
              <TextButton><CellStylesIcon />Στυλ κελιών<Arrow /></TextButton>
            </GroupBody>
          </RibbonGroup>

          <RibbonGroup name="Κελιά" width={120}>
            <GroupBody $column>
              <TextButton><InsertCellsIcon />Εισαγωγή<Arrow /></TextButton>
              <TextButton><DeleteCellsIcon />Διαγραφή<Arrow /></TextButton>
              <TextButton><FormatCellsIcon />Μορφοποίηση<Arrow /></TextButton>
            </GroupBody>
          </RibbonGroup>

          <RibbonGroup name="Επεξεργασία" width={175}>
            <GroupBody $gap={2}>
              <Stack>
                <IconButton $width={34} aria-label="Αυτόματη άθροιση"><Glyph>Σ</Glyph><Arrow /></IconButton>
                <IconButton $width={34} aria-label="Γέμισμα"><FillDownIcon /><Arrow /></IconButton>
                <IconButton $width={34} aria-label="Απαλοιφή"><EraserIcon /><Arrow /></IconButton>
              </Stack>
              <LargeButton $width={76}>
                <LargeIcon><SortFilterIcon /></LargeIcon>
                <LabelLine>Ταξινόμηση &amp;</LabelLine>
                <LabelLine>φιλτράρισμα<Arrow /></LabelLine>
              </LargeButton>
              <LargeButton $width={54}>
                <LargeIcon><BinocularsIcon /></LargeIcon>
                <LabelLine>Εύρεση &amp;</LabelLine>
                <LabelLine>επιλογή<Arrow /></LabelLine>
              </LargeButton>
            </GroupBody>
          </RibbonGroup>
        </Ribbon>

        <FormulaBar>
          <NameBox>
            <NameInput aria-label="Πλαίσιο ονόματος" defaultValue="A37" />
            <NameArrow />
          </NameBox>
          <FxPanel>
            <Knob />
            <FxButton aria-label="Εισαγωγή συνάρτησης">f<FxSub>x</FxSub></FxButton>
          </FxPanel>
          <FormulaInput aria-label="Γραμμή τύπων" defaultValue="26/2/2015  9:50:55 πμ" />
          <ExpandButton aria-label="Ανάπτυξη γραμμής τύπων">
            <svg width="7" height="8" viewBox="0 0 7 8">
              <path d="M.5.5l3 3 3-3M.5 4.500l3 3 3-3" fill="none" stroke="#000" strokeWidth="1.500" />
            </svg>
          </ExpandButton>
        </FormulaBar>

        <SheetArea>
          <SheetView>
            <Sheet>
              <colgroup>
                <col width="26" />
                {COLUMNS.map((c) => (
                  <col key={c} width="151" />
                ))}
              </colgroup>
              <thead>
                <tr>
                  <Corner>
                    <svg width="15" height="11" viewBox="0 0 15 11">
                      <path d="M15 1v9H6z" fill="#e7f0fb" />
                    </svg>
                  </Corner>
                  {COLUMNS.map((c, i) => (
                    <ColumnHead key={c} scope="col" $active={i === 0}>{c}</ColumnHead>
                  ))}
                </tr>
              </thead>
              <tbody>
                {[HEADER, ...ROWS].map((row, r) => (
                  <tr key={r}>
                    <RowHead scope="row">{r + 1}</RowHead>
                    {row.map((value, c) => (
                      <Cell key={c} $right={c === 0 && r > 0} $frozen={r === 0}>{value}</Cell>
                    ))}
                  </tr>
                ))}
              </tbody>
            </Sheet>
          </SheetView>
          <VerticalBar>
            <BarArrow d="M0 5h9L4.500 0z" w={9} h={5} />
            <VerticalThumb><Grip vertical /></VerticalThumb>
            <BarArrow d="M0 0h9L4.500 5z" w={9} h={5} />
          </VerticalBar>
        </SheetArea>

        <SheetBar>
          <SheetNav>
            <PlainButton aria-label="Πρώτο φύλλο"><NavIcon d="M0 0h1.500v8H0zM6 0v8L2 4z" /></PlainButton>
            <PlainButton aria-label="Προηγούμενο φύλλο"><NavIcon d="M5 0v8L1 4z" /></PlainButton>
            <PlainButton aria-label="Επόμενο φύλλο"><NavIcon d="M2 0v8l4-4z" /></PlainButton>
            <PlainButton aria-label="Τελευταίο φύλλο"><NavIcon d="M1 0v8l4-4zM5.500 0H7v8H5.500z" /></PlainButton>
          </SheetNav>
          <SheetTab>1 απαντήσεις φόρμας</SheetTab>
          <PlainButton aria-label="Εισαγωγή φύλλου"><SlantIcon /></PlainButton>
          <BarFill />
          <Splitter />
          <HorizontalBar>
            <BarArrow d="M5 0v9L0 4.500z" w={5} h={9} />
            <HorizontalThumb><Grip /></HorizontalThumb>
            <BarArrow d="M0 0v9l5-4.500z" w={5} h={9} />
          </HorizontalBar>
          <BarCorner />
        </SheetBar>

        <StatusBar>
          <StatusText>Έτοιμο</StatusText>
          <BarFill />
          <StatusTools>
            <ViewSet>
              <ViewButton $on aria-label="Κανονική"><NormalViewIcon /></ViewButton>
              <ViewButton aria-label="Διάταξη σελίδας"><PageViewIcon /></ViewButton>
              <ViewButton aria-label="Αλλαγές σελίδων"><BreakViewIcon /></ViewButton>
            </ViewSet>
            <ZoomLabel>{zoom}%</ZoomLabel>
            <PlainButton aria-label="Σμίκρυνση" onClick={() => setZoom(Math.max(10, zoom - 10))}><CircleIcon /></PlainButton>
            <ZoomTrack>
              <ZoomLine />
              <ZoomRange type="range" min={10} max={190} value={zoom} aria-label="Ζουμ" onChange={(e) => setZoom(Number(e.target.value))} />
              <ZoomThumb style={{ left: `${((zoom - 10) / 180) * 100}%` }}>
                <svg width="9" height="13" viewBox="0 0 9 13">
                  <path d="M.5.5h8v8l-4 4-4-4z" fill="#e3eefb" stroke="#55729f" />
                  <path d="M4.500 3v5" stroke="#8aa3c8" />
                </svg>
              </ZoomThumb>
            </ZoomTrack>
            <PlainButton aria-label="Μεγέθυνση" onClick={() => setZoom(Math.min(190, zoom + 10))}><CircleIcon plus /></PlainButton>
          </StatusTools>
        </StatusBar>

        <TaskBar>
          <TaskButton aria-label="Παράθυρο 1" />
          <TaskButton aria-label="Παράθυρο 2">
            <svg width="10" height="8" viewBox="0 0 10 8"><path d="M0 0h10v8H0z" fill="#e8d37c" /></svg>
          </TaskButton>
          <TaskButton aria-label="Παράθυρο 3">
            <svg width="10" height="8" viewBox="0 0 10 8"><path d="M0 0h10v8H0z" fill="#b9c3dc" /></svg>
          </TaskButton>
          <TaskButton aria-label="Παράθυρο 4">
            <svg width="10" height="8" viewBox="0 0 10 8"><path d="M0 0h10v8H0z" fill="#b9c3dc" /></svg>
          </TaskButton>
          <TaskButton $active aria-label="Microsoft Excel" />
          <Tray>
            <svg width="56" height="8" viewBox="0 0 56 8">
              <path d="M0 5h17v3H0z" fill="#e0301e" />
              <path d="M32.500 4.500h9V8h-9z" fill="#fff" stroke="#24506e" />
              <path d="M50 6l4-3v5" fill="none" stroke="#222" />
            </svg>
          </Tray>
        </TaskBar>
        <StartOrb aria-label="Έναρξη">
          <StartIcon />
        </StartOrb>
      </Window>
    </>
  );
}
